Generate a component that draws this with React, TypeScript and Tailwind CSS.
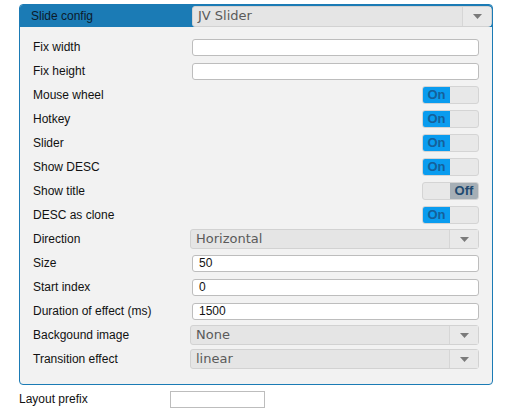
import React from "react";

type Row =
  | { label: string; kind: "input"; value?: string }
  | { label: string; kind: "toggle"; on: boolean }
  | { label: string; kind: "select"; value: string };

const ROWS: Row[] = [
  { label: "Fix width", kind: "input" },
  { label: "Fix height", kind: "input" },
  { label: "Mouse wheel", kind: "toggle", on: true },
  { label: "Hotkey", kind: "toggle", on: true },
  { label: "Slider", kind: "toggle", on: true },
  { label: "Show DESC", kind: "toggle", on: true },
  { label: "Show title", kind: "toggle", on: false },
  { label: "DESC as clone", kind: "toggle", on: true },
  { label: "Direction", kind: "select", value: "Horizontal" },
  { label: "Size", kind: "input", value: "50" },
  { label: "Start index", kind: "input", value: "0" },
  { label: "Duration of effect (ms)", kind: "input", value: "1500" },
  { label: "Backgound image", kind: "select", value: "None" },
  { label: "Transition effect", kind: "select", value: "linear" },
];

function Arrow() {
  return (
    <svg width="9" height="5" viewBox="0 0 9 5">
      <path d="M0 0 H9 L4.5 5 Z" fill="#7a7a7a" />
    </svg>
  );
}

function Select({ value, className = "" }: { value: string; className?: string }) {
  return (
    <div
      className={`flex h-[20px] items-stretch rounded-[3px] border border-[#d2d2d2] bg-[#e5e5e5] ${className}`}
    >
      <span className="flex flex-1 items-center pl-[5px] font-['DejaVu_Sans',sans-serif] text-[13px] text-[#5a5a5a]">
        {value}
      </span>
      <span className="flex w-[29px] items-center justify-center border-l border-[#d6d6d6] bg-[#e9e9e9]">
        <Arrow />
      </span>
    </div>
  );
}

function Toggle({ on }: { on: boolean }) {
  return (
    <div className="ml-auto flex h-[18px] w-[57px] overflow-hidden rounded-[3px] border border-[#d4d4d4] bg-[#e8e8e8] text-[13px] font-bold">
      {on ? (
        <>
          <span className="flex w-[27px] items-center justify-center bg-[#0a9cef] text-[#15609a]">On</span>
          <span className="flex-1" />
        </>
      ) : (
        <>
          <span className="flex-1" />
          <span className="flex w-[28px] items-center justify-center bg-[#a6afb6] text-[#1f4a70]">Off</span>
        </>
      )}
    </div>
  );
}

export default function App() {
  return (
    <div className="h-[416px] w-[512px] bg-white pl-[19px] pt-[4px] font-['Liberation_Sans',Arial,sans-serif] text-[12px] text-[#111]">
      <div className="w-[474px] overflow-hidden rounded-[4px] border border-[#1b7bb5] bg-[#f2f2f2]">
        <div className="flex h-[22px] items-center bg-[#1b7bb5] pl-[11px]">
          <span className="w-[161px] text-[#0b1a2a]">Slide config</span>
          <Select value="JV Slider" className="h-[21px] flex-1 rounded-r-[4px]" />
        </div>
        <div className="flex flex-col pb-[13px] pl-[13px] pr-[13px] pt-[8px]">
          {ROWS.map((row) => (
            <div key={row.label} className="flex h-[24px] items-center">
              <span className="w-[159px] shrink-0">{row.label}</span>
              <div className="flex flex-1 items-center">
                {row.kind === "input" && (
                  <div className="flex h-[17px] w-full items-center rounded-[3px] border border-[#bdbdbd] bg-white pl-[6px]">
                    {row.value}
                  </div>
                )}
                {row.kind === "toggle" && <Toggle on={row.on} />}
                {row.kind === "select" && <Select value={row.value} className="-ml-[2px] w-[289px]" />}
              </div>
            </div>
          ))}
        </div>
      </div>
      <div className="flex h-[28px] items-center">
        <span className="w-[151px]">Layout prefix</span>
        <div className="h-[17px] w-[95px] border border-[#bdbdbd] bg-white" />
      </div>
    </div>
  );
}
